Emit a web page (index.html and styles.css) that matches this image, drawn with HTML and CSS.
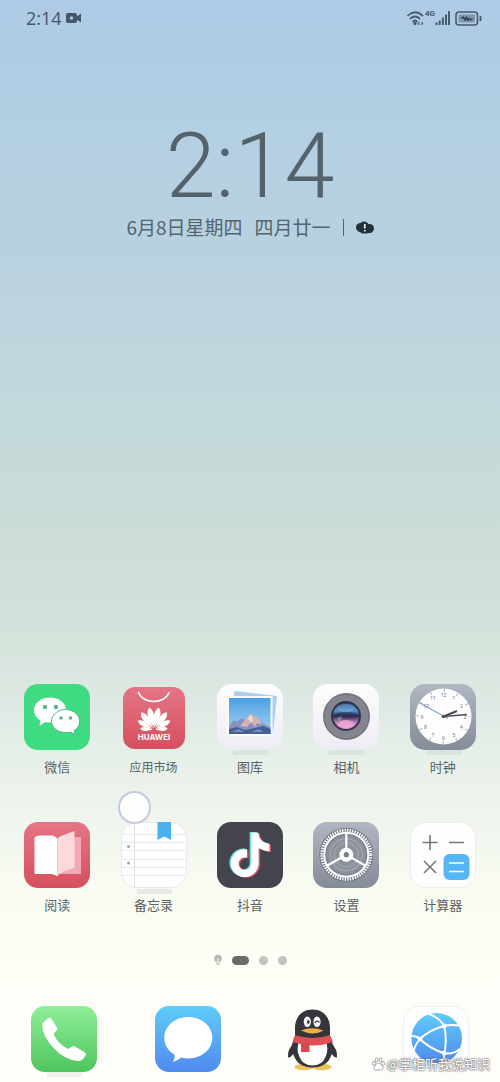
FILE: index.html
```html
<!DOCTYPE html>
<html lang="zh-CN">
<head>
  <meta charset="UTF-8" />
  <meta name="viewport" content="width=device-width, initial-scale=1.0"/>
  <title>主屏幕</title>
  <link rel="stylesheet" href="styles.css">
</head>
<body>

  <!-- shared gradients -->
  <svg class="defs" width="0" height="0" aria-hidden="true">
    <defs>
      <linearGradient id="gRed" x1="0" y1="0" x2="0" y2="1"><stop offset="0" stop-color="#e57585"/><stop offset="1" stop-color="#d6505e"/></linearGradient>
      <linearGradient id="gWhite" x1="0" y1="0" x2="0" y2="1"><stop offset="0" stop-color="#fdfdfe"/><stop offset="1" stop-color="#ececf3"/></linearGradient>
      <linearGradient id="gGray" x1="0" y1="0" x2="0" y2="1"><stop offset="0" stop-color="#b0b7c2"/><stop offset="1" stop-color="#858c98"/></linearGradient>
      <linearGradient id="gGreen" x1="0" y1="0" x2="0" y2="1"><stop offset="0" stop-color="#8fee98"/><stop offset="1" stop-color="#4fc55e"/></linearGradient>
      <linearGradient id="gBlue" x1="0" y1="0" x2="0" y2="1"><stop offset="0" stop-color="#5fcdf8"/><stop offset="1" stop-color="#5089f0"/></linearGradient>
      <linearGradient id="gSky" x1="0" y1="0" x2="0" y2="1"><stop offset="0" stop-color="#4a9fe3"/><stop offset="1" stop-color="#a9d5f2"/></linearGradient>
      <linearGradient id="gLens" x1="0" y1="0" x2="0" y2="1"><stop offset="0" stop-color="#243f6b"/><stop offset=".3" stop-color="#5b93cf"/><stop offset=".5" stop-color="#2c2b50"/><stop offset=".75" stop-color="#c480b8"/><stop offset="1" stop-color="#e49bc8"/></linearGradient>
    </defs>
  </svg>

  <header class="status-bar">
    <div class="status-group">
      <span class="status-time">2:14</span>
      <svg width="16" height="12" viewBox="0 0 16 12" fill="#43566a"><rect x="0" y="1" width="11" height="10" rx="2"/><path d="M10 5l5-3.500v9L10 7z"/><circle cx="5.500" cy="6" r="1.700" fill="#b0cbe4"/></svg>
    </div>
    <div class="status-group status-right">
      <svg width="18" height="16" viewBox="0 0 18 16" fill="none" stroke="#465a6c" stroke-width="1.700" stroke-linecap="round"><path d="M1 5.500Q8 -1 15.500 5.500M3.500 8.500Q8 4.500 12.500 8.500M6 11.500Q8 9.500 10 11.500"/><circle cx="8" cy="13.500" r=".8"/><path d="M12 12.500l-.7 1 .7 1M14.800 12.500l.7 1-.7 1" stroke-width="1.300"/></svg>
      <span class="net">4G</span>
      <svg width="15" height="14" viewBox="0 0 15 14" stroke="#465a6c" stroke-width="2"><path d="M1.500 11.500V14M4.700 9.500V14M7.900 6.500V14M11 3.500V14M14 0V14"/></svg>
      <svg class="battery" width="27" height="15" viewBox="0 0 27 15"><rect x="1" y="1" width="21.500" height="13" rx="3" fill="none" stroke="#465a6c" stroke-width="1.600"/><rect x="3.500" y="3.500" width="16.500" height="8" rx="1" fill="#8298a9"/><path d="M5 7l4-2v2l3-2v2l2-1v1.500h5l-4 2.500V8.500l-3 2v-2L9 10V8z" fill="#334556"/><path d="M25.500 5v5" stroke="#465a6c" stroke-width="1.800"/></svg>
    </div>
  </header>

  <section class="clock">
    <div class="clock-time">2:14</div>
    <div class="clock-date">
      <span>6月8日星期四</span>
      <span>四月廿一</span>
      <i class="divider"></i>
      <svg width="18" height="13" viewBox="0 0 18 13" fill="#26323b"><circle cx="4.500" cy="6.500" r="4.500"/><circle cx="8" cy="5.500" r="5"/><circle cx="13.500" cy="7.500" r="4.500"/><rect x="4" y="6" width="10" height="6.500" rx="3"/><path d="M8.800 3v4.500M8.800 9v1.600" stroke="#e8f0f5" stroke-width="1.700"/></svg>
    </div>
  </section>

  <main class="apps">
    <button class="app" type="button">
      <svg class="icon" viewBox="0 0 66 66">
        <rect width="66" height="66" rx="14" fill="#3edb83"/>
        <path d="M26 13.500c9 0 16 5.500 16 12.500s-7 12.500-16 12.500c-1.800 0-3.500-.2-5-.6L15.500 42l.8-5.500C12.500 34 10 30.500 10 26c0-7 7-12.500 16-12.500z" fill="#fff"/>
        <circle cx="21" cy="23" r="2.200" fill="#57b58a"/><circle cx="32" cy="23" r="2.200" fill="#57b58a"/>
        <path d="M41.500 25.500c8 0 14.200 5.200 14.200 11.800 0 4-2 7-5.500 9.200l1 4-4.900-2.500c-1.500.4-3 .6-4.800.6-8 0-14-5.200-14-11.300s6-11.800 14-11.800z" fill="#fff" stroke="#48b982" stroke-width="1"/>
        <circle cx="37" cy="34" r="1.800" fill="#57b58a"/><circle cx="46.500" cy="34" r="1.800" fill="#57b58a"/>
      </svg>
      <span>微信</span>
    </button>

    <button class="app app-market" type="button">
      <svg class="icon" viewBox="0 0 66 66">
        <defs>
          <path id="petal" d="M0 -2C-1 -8 -6.500 -17 0 -23C6.500 -17 1 -8 0 -2z"/>
        </defs>
        <rect x="2" y="3" width="62" height="62" rx="12" fill="url(#gRed)"/>
        <path d="M17.500 8.500C22 20.500 43.500 20.500 48 8.500" fill="none" stroke="#fff" stroke-width="1.500" stroke-linecap="round"/>
        <g fill="#fff" transform="translate(33 46)">
          <use href="#petal" transform="rotate(-12)"/>
          <use href="#petal" transform="rotate(12)"/>
          <use href="#petal" transform="rotate(-36) scale(.95)"/>
          <use href="#petal" transform="rotate(36) scale(.95)"/>
          <use href="#petal" transform="rotate(-60) scale(.82)"/>
          <use href="#petal" transform="rotate(60) scale(.82)"/>
          <use href="#petal" transform="rotate(-84) scale(.6)"/>
          <use href="#petal" transform="rotate(84) scale(.6)"/>
        </g>
        <text x="33" y="56" class="brand">HUAWEI</text>
      </svg>
      <span>应用市场</span>
    </button>

    <button class="app" type="button">
      <svg class="icon" viewBox="0 0 66 66">
        <rect x="16" y="66" width="35" height="5" fill="#cdd9d3" opacity=".5"/>
        <rect width="66" height="66" rx="15" fill="url(#gWhite)"/>
        <path d="M17.500 7L60 12L56 48L14 44z" fill="#abcdf0"/>
        <rect x="10" y="12" width="45.500" height="40" fill="#fff"/>
        <rect x="12" y="14" width="41.500" height="36" fill="url(#gSky)"/>
        <path d="M12 42L17 36L20 38L25 34L28 36L33 30L36 33L38 31L43 37L47 40L53.500 43V50H12z" fill="#8793bd"/>
        <path d="M23 42L28 36L33 30L36 33L38 31L43 37L45 41L40 39L38 43L34 38L30 43z" fill="#d3b3b8"/>
        <path d="M33 30L36 33L35 39L31 35z" fill="#f1d7d2"/>
        <path d="M12 45L20 43L28 46L38 44L46 42L53.500 45V50H12z" fill="#435f96"/>
        <path d="M14 48L22 45L27 48zM34 48L42 45L47 48z" fill="#7590bd"/>
      </svg>
      <span>图库</span>
    </button>

    <button class="app" type="button">
      <svg class="icon" viewBox="0 0 66 66">
        <rect x="16" y="66" width="35" height="5" fill="#cdd9d3" opacity=".5"/>
        <rect width="66" height="66" rx="15" fill="url(#gWhite)"/>
        <circle cx="33.500" cy="32.500" r="23.500" fill="#85858f"/>
        <circle cx="33.500" cy="32.500" r="22.500" fill="none" stroke="#6e6e79"/>
        <circle cx="33" cy="32" r="15" fill="#31334f"/>
        <circle cx="33" cy="32" r="13" fill="url(#gLens)"/>
        <ellipse cx="33" cy="24" rx="9" ry="4" fill="#84b9e8" opacity=".4"/>
        <ellipse cx="33" cy="31" rx="12" ry="3" fill="#29294d" opacity=".5"/>
        <ellipse cx="33" cy="40" rx="8" ry="4" fill="#f3b2dc" opacity=".7"/>
        <path d="M24 34L29 32L27 38z" fill="#7ecbc8" opacity=".5"/>
      </svg>
      <span>相机</span>
    </button>

    <button class="app" type="button">
      <svg class="icon" viewBox="0 0 66 66">
        <rect x="17" y="66" width="35" height="5" fill="#cdd9d3" opacity=".5"/>
        <rect width="66" height="66" rx="15" fill="url(#gGray)"/>
        <circle cx="33.500" cy="32.500" r="28" fill="#fdfdfe"/>
        <circle cx="33.500" cy="32.500" r="26" fill="none" stroke="#9a9fa8" stroke-width="3" stroke-dasharray=".8 12.814" stroke-dashoffset=".4"/>
        <g class="dial">
          <text x="33.500" y="13">12</text><text x="44" y="16">1</text><text x="51.500" y="24">2</text><text x="55" y="34.500">3</text><text x="51.500" y="45">4</text><text x="44" y="53">5</text>
          <text x="33.500" y="56">6</text><text x="23" y="53">7</text><text x="15.500" y="45">8</text><text x="12" y="34.500">9</text><text x="16" y="24">10</text><text x="23" y="16">11</text>
        </g>
        <path d="M9.500 19L38 34.500" stroke="#5c93c6" stroke-width="1"/>
        <path d="M33.500 32.500L57 30.500" stroke="#4a4d55" stroke-width="1.400"/>
        <path d="M33.500 32.500L47 27" stroke="#4a4d55" stroke-width="2"/>
        <circle cx="33.500" cy="32.500" r="1.800" fill="#4a4d55"/>
      </svg>
      <span>时钟</span>
    </button>

    <button class="app" type="button">
      <svg class="icon" viewBox="0 0 66 66">
        <rect width="66" height="66" rx="14" fill="url(#gRed)"/>
        <path d="M48 15H57V52H36z" fill="#f3a9b3"/>
        <path d="M10.500 15.500Q12 13.500 17 13.500H27Q32 13.500 33.300 17V54.500Q31 52 26 52H10.500z" fill="#fff"/>
        <path d="M33.300 17Q34 15 37 14L50.500 9V46Q36 49.500 33.300 54.500z" fill="#fbd9dd"/>
      </svg>
      <span>阅读</span>
    </button>

    <button class="app" type="button">
      <svg class="icon" viewBox="0 0 66 66">
        <rect x="16" y="67" width="35" height="5" fill="#dfe3de" opacity=".7"/>
        <rect x=".5" y=".5" width="65" height="65" rx="15" fill="#fefefe" stroke="#e9e9ec"/>
        <path d="M1 12.500H65M1 20.500H65M1 28.500H65M1 37.500H65M1 45.500H65M1 53.500H65" stroke="#ebebee"/>
        <path d="M13.500 1V65" stroke="#e0e0e4"/>
        <circle cx="7.500" cy="24.500" r="1.500" fill="#a0a3a8"/><circle cx="7.500" cy="41" r="1.500" fill="#a0a3a8"/>
        <path d="M36.500 0H50V18L43.300 14.500L36.500 18z" fill="#4bb1ee"/>
      </svg>
      <span>备忘录</span>
    </button>

    <button class="app" type="button">
      <svg class="icon" viewBox="0 0 66 66">
        <defs>
          <path id="note" d="M12.525.02c1.310-.02 2.610-.01 3.910-.02.08 1.530.63 3.090 1.750 4.170 1.120 1.110 2.700 1.620 4.240 1.790v4.030c-1.440-.05-2.890-.35-4.200-.97-.57-.26-1.100-.59-1.620-.93-.01 2.920.01 5.840-.02 8.750-.08 1.400-.54 2.790-1.350 3.940-1.310 1.920-3.580 3.170-5.910 3.210-1.430.08-2.860-.31-4.080-1.030-2.020-1.190-3.440-3.370-3.650-5.710-.02-.5-.03-1-.01-1.490.18-1.900 1.120-3.720 2.580-4.960 1.660-1.440 3.980-2.130 6.150-1.720.02 1.480-.04 2.960-.04 4.440-.99-.32-2.150-.23-3.020.37-.63.41-1.110 1.040-1.360 1.750-.21.51-.15 1.070-.14 1.610.24 1.640 1.820 3.020 3.500 2.870 1.120-.01 2.190-.66 2.770-1.610.19-.33.4-.67.41-1.060.1-1.790.06-3.570.07-5.360.01-4.030-.01-8.050.02-12.070z"/>
        </defs>
        <rect width="66" height="66" rx="14" fill="#43444c"/>
        <use href="#note" transform="translate(12.500 11.500) scale(1.850)" fill="#d1506a"/>
        <use href="#note" transform="translate(9.500 10) scale(1.850)" fill="#6de3e0"/>
        <use href="#note" transform="translate(11 10.700) scale(1.850)" fill="#fff"/>
      </svg>
      <span>抖音</span>
    </button>

    <button class="app" type="button">
      <svg class="icon" viewBox="0 0 66 66">
        <rect width="66" height="66" rx="14" fill="url(#gGray)"/>
        <circle cx="33.300" cy="32.700" r="27" fill="#747a85"/>
        <circle cx="33.300" cy="32.700" r="20" fill="#8b919b"/>
        <circle cx="33.300" cy="32.700" r="16" fill="none" stroke="#a3a8b1" stroke-width="1.200"/>
        <circle cx="33.300" cy="32.700" r="12" fill="none" stroke="#a3a8b1" stroke-width="2" stroke-dasharray="1.500 1"/>
        <circle cx="33.300" cy="32.700" r="24.500" fill="none" stroke="#fff" stroke-width="3" stroke-dasharray="1.400 1.166"/>
        <circle cx="33.300" cy="32.700" r="22" fill="none" stroke="#fff" stroke-width="2"/>
        <path d="M33.300 32.700V11M33.300 32.700L14.500 43.500M33.300 32.700L52.100 43.500" stroke="#fff" stroke-width="2.200"/>
        <circle cx="33.300" cy="32.700" r="7" fill="#fff"/><circle cx="33.300" cy="32.700" r="2.600" fill="#777d88"/>
      </svg>
      <span>设置</span>
    </button>

    <button class="app" type="button">
      <svg class="icon" viewBox="0 0 66 66">
        <rect x=".5" y=".5" width="65" height="65" rx="15" fill="#fefefe" stroke="#eeeeef"/>
        <path d="M12.500 20.500H27.500M20 13V28M39 20.500H54M14 39L26 51M26 39L14 51" stroke="#75757a" stroke-width="1.600"/>
        <rect x="33.500" y="32" width="26" height="26" rx="6" fill="#56b6f2"/>
        <path d="M39 41H54M39 49.500H54" stroke="#fff" stroke-width="1.600"/>
      </svg>
      <span>计算器</span>
    </button>
  </main>

  <nav class="pager">
    <svg width="8" height="12" viewBox="0 0 8 12"><circle cx="4" cy="4.500" r="3.800" fill="#b9b8b4"/><path d="M2.500 8H5.500V11H2.500z" fill="#c9c8c3"/><path d="M4 4.500V9" stroke="#fff"/></svg>
    <i class="dot active"></i>
    <i class="dot"></i>
    <i class="dot"></i>
  </nav>

  <footer class="dock">
    <button class="app" type="button" aria-label="电话">
      <svg class="icon" viewBox="0 0 66 66">
        <rect x="16" y="66" width="35" height="5" fill="#eef0ea"/>
        <rect width="66" height="66" rx="14" fill="url(#gGreen)"/>
        <path d="M12 16.500L17.500 12Q19 11 20.300 12.700L26 21.500Q27 23 25.500 24.500L22.500 28Q27 38 37 43L41 40.500Q42.500 39.500 44 40.500L54 46.500Q55.500 47.500 54.500 49.500Q52 55 46.500 55Q34 54 23 42.500Q11 30 11.300 18.500Q11.300 17.300 12 16.500z" fill="#fff"/>
      </svg>
    </button>
    <button class="app" type="button" aria-label="信息">
      <svg class="icon" viewBox="0 0 66 66">
        <rect width="66" height="66" rx="14" fill="url(#gBlue)"/>
        <path d="M33.300 11C46.500 11 57.300 20 57.300 31.700S46.500 52.400 33.300 52.400Q29.500 52.400 26 51.500Q22.500 55 18.500 55.800Q18 55.500 18.500 54.500Q20 52 19.500 48.500C13 45 9.300 38.500 9.300 31.700C9.300 20 20 11 33.300 11z" fill="#fff"/>
      </svg>
    </button>
    <button class="app" type="button" aria-label="QQ">
      <svg class="icon" viewBox="0 0 66 66">
        <ellipse cx="25" cy="61" rx="9.500" ry="3.200" fill="#ecc25b"/><ellipse cx="43" cy="61" rx="9.500" ry="3.200" fill="#ecc25b"/>
        <path d="M16 35Q8 44 9 51Q10.500 53 15 47zM51 35Q59 44 58 51Q56.500 53 52 47z" fill="#35363b"/>
        <path d="M33.500 3.500C44.500 3.500 51 11.500 51 22V30C55 37 54 46 52 50C49 58 42 61.500 33.500 61.500S18 58 15 50C13 46 12 37 16 30V22C16 11.500 22.500 3.500 33.500 3.500z" fill="#35363b"/>
        <path d="M20 35H47Q50 44 46.500 51Q43 59.500 33.500 59.500T20.500 51Q17 44 20 35z" fill="#fff"/>
        <path d="M16 29Q33.500 35 51 29L54 36Q34 43 13.500 36z" fill="#e04e58"/>
        <path d="M22 37H30.500V46H22z" fill="#d94650"/>
        <ellipse cx="28.300" cy="15.700" rx="3.600" ry="5.200" fill="#fff"/><ellipse cx="38" cy="15.700" rx="3.600" ry="5.200" fill="#fff"/>
        <ellipse cx="29.300" cy="16" rx="1.300" ry="2" fill="#35363b"/><path d="M36 17Q38 13.500 40.500 16.500" stroke="#35363b" stroke-width="1.200" fill="none"/>
        <path d="M22 24.500Q33 20 44.500 24.500Q34 30.500 22 24.500z" fill="#efb13d"/>
      </svg>
    </button>
    <button class="app" type="button" aria-label="浏览器">
      <svg class="icon" viewBox="0 0 66 66">
        <rect x=".5" y=".5" width="65" height="65" rx="15" fill="#fefefe" stroke="#f0f0f0"/>
        <circle cx="33.700" cy="32.300" r="25.300" fill="url(#gBlue)"/>
        <g fill="none" stroke="#fff" stroke-width="1.900" stroke-linecap="round">
          <path d="M26 8Q37 12 41 20Q45 32 40 57"/>
          <path d="M58 20Q49 18 41 20Q26 24 17 33Q12 39 11 44"/>
          <path d="M9 30Q14 30 17 33Q26 42 40 47Q50 49 57 43"/>
        </g>
        <g fill="#fff"><circle cx="41" cy="20" r="2.400"/><circle cx="17" cy="33" r="2.400"/><circle cx="41" cy="47" r="2.400"/></g>
      </svg>
    </button>
  </footer>

  <i class="touch"></i>

  <div class="watermark">
    <svg width="13" height="14" viewBox="0 0 13 14" fill="#fff" stroke="#8e9297" stroke-width=".8"><ellipse cx="2" cy="6.500" rx="1.500" ry="2"/><ellipse cx="4.500" cy="2.800" rx="1.500" ry="2"/><ellipse cx="8.500" cy="2.800" rx="1.500" ry="2"/><ellipse cx="11" cy="6.500" rx="1.500" ry="2"/><path d="M6.500 6C9 6 9 8 10.500 9.500C12 11.500 10.500 13.500 8.500 13H4.500C2.500 13.500 1 11.500 2.500 9.500C4 8 4 6 6.500 6z"/></svg>
    <span>@掌柜听我说知识</span>
  </div>

</body>
</html>
```
FILE: styles.css
```css
* {
  box-sizing: border-box;
}

body {
  margin: 0;
  min-height: 100vh;
  display: flex;
  flex-direction: column;
  position: relative;
  font-family: "Noto Sans CJK SC", sans-serif;
  color: #5c6163;
  background: linear-gradient(#aecae5 0%, #b3cfe3 11%, #b8d1df 23%, #c1d8dd 36%, #c9dbd8 46%, #d3e2da 58%, #dfe9e3 65%, #edf4ed 74%, #f9fcf2 83%, #fefdf6 89%, #fefdf9 100%);
}

svg {
  display: block;
}

.defs {
  position: absolute;
}

.status-bar {
  display: flex;
  justify-content: space-between;
  align-items: center;
  height: 36px;
  padding: 0 18px 0 26px;
}

.status-group {
  display: flex;
  align-items: center;
  gap: 4px;
}

.status-time {
  font-family: "Open Sans", sans-serif;
  font-size: 18px;
  line-height: 24px;
  color: #43566a;
}

.status-right {
  gap: 0;
}

.net {
  align-self: flex-start;
  font-family: Roboto, sans-serif;
  font-size: 8px;
  font-weight: bold;
  line-height: 8px;
  color: #465a6c;
}

.battery {
  margin-left: 5px;
}

.clock {
  margin-top: 89px;
  text-align: center;
}

.clock-time {
  font-family: Roboto, sans-serif;
  font-size: 90px;
  font-weight: 300;
  line-height: 84px;
  color: #53626b;
}

.clock-date {
  display: flex;
  justify-content: center;
  align-items: center;
  gap: 12px;
  margin-top: 6px;
  font-size: 19px;
  line-height: 24px;
  color: #53656e;
}

.divider {
  width: 1px;
  height: 17px;
  background: #53656e;
}

.apps {
  display: grid;
  grid-template-columns: repeat(5, 1fr);
  row-gap: 46px;
  margin-top: auto;
  padding: 0 9px;
}

.app {
  display: flex;
  flex-direction: column;
  align-items: center;
  gap: 8px;
  padding: 0;
  border: none;
  background: none;
  font-family: inherit;
  font-size: 13px;
  line-height: 18px;
  color: #5c6163;
  cursor: pointer;
}

.app-market {
  font-size: 12px;
}

.icon {
  width: 66px;
  height: 66px;
  overflow: visible;
}

.brand {
  font-family: Inter, sans-serif;
  font-size: 8px;
  font-weight: 700;
  text-anchor: middle;
  fill: #fff;
}

.dial {
  font-family: Roboto, sans-serif;
  font-size: 5px;
  text-anchor: middle;
  fill: #70747c;
}

.pager {
  display: flex;
  justify-content: center;
  align-items: center;
  gap: 10px;
  height: 10px;
  margin-top: 41px;
}

.dot {
  width: 9px;
  height: 9px;
  border-radius: 5px;
  background: #c3c2be;
}

.dot.active {
  width: 17px;
  background: #6b6b6a;
}

.dock {
  display: grid;
  grid-template-columns: repeat(4, 1fr);
  margin-top: 41px;
  padding: 0 2px 10px;
}

/* floating touch point */
.touch {
  position: absolute;
  left: 118px;
  bottom: 258px;
  width: 33px;
  height: 33px;
  border: 2px solid #c5c9dc;
  border-radius: 50%;
  background: rgba(255, 255, 255, 0.85);
}

.watermark {
  position: absolute;
  right: 10px;
  bottom: 8px;
  display: flex;
  align-items: center;
  gap: 2px;
  font-size: 13px;
  line-height: 20px;
  color: #fff;
  text-shadow: 0 0 1px #6f7378, 0 0 2px #6f7378, 0 0 2px #6f7378;
}
```
